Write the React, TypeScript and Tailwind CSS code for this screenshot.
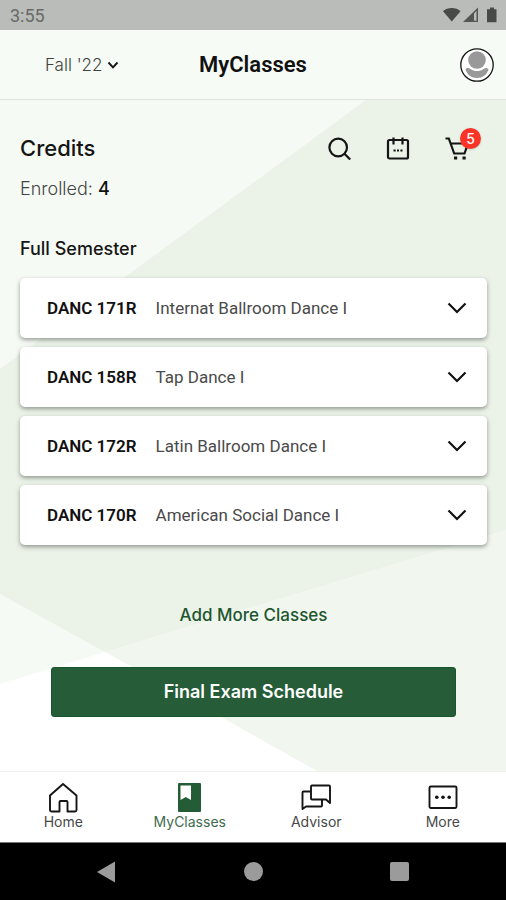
import { useState } from "react";
import type { ReactNode } from "react";

const roboto = "font-['Roboto','Liberation_Sans',sans-serif]";
const inter = "font-['Inter','Liberation_Sans',sans-serif]";

const courses = [
  { code: "DANC 171R", title: "Internat Ballroom Dance I" },
  { code: "DANC 158R", title: "Tap Dance I" },
  { code: "DANC 172R", title: "Latin Ballroom Dance I" },
  { code: "DANC 170R", title: "American Social Dance I" },
];

function StatusBar() {
  return (
    <div className={`flex h-[30px] items-center justify-between bg-[#babcb9] pr-2 pl-[10px] text-[#686a68] ${roboto}`}>
      <span className="pt-px text-lg leading-6">3:55</span>
      <svg width="56" height="18" viewBox="0 0 56 18" fill="#484a48" aria-hidden="true">
        <path d="M1 5.2C5.5 1 14 1 18.500 5.200L9.800 15.600Z" />
        <path d="M36 1.500V16H21Z" opacity=".9" />
        <path d="M32 7.500L34.500 4.800V14.800H32Z" fill="#babcb9" />
        <path d="M46 3.200H48V1.500H52V3.200H54.500V16.200H45V3.200Z" />
      </svg>
    </div>
  );
}

function Header() {
  return (
    <header className="grid h-[70px] grid-cols-[1fr_auto_1fr] items-center border-b border-[#dfe3de] bg-[#f6fbf5] px-3">
      <div className="flex items-center pl-[33px]">
        <select
          aria-label="Term"
          className={`w-[62px] appearance-none bg-transparent text-[17px] leading-6 font-light text-[#3f423f] ${inter}`}
        >
          <option>Fall '22</option>
        </select>
        <svg width="12" height="12" viewBox="0 0 12 12" fill="none" stroke="#151515" strokeWidth="1.900" className="pointer-events-none" aria-hidden="true">
          <path d="M1.500 3.500L6 8.300L10.500 3.500" />
        </svg>
      </div>
      <h1 className={`text-[22px] leading-7 font-semibold text-[#111] ${roboto}`}>MyClasses</h1>
      <button type="button" aria-label="Profile" className="justify-self-end rounded-full">
        <svg width="34" height="34" viewBox="0 0 34 34" aria-hidden="true">
          <circle cx="17" cy="17" r="16.200" fill="#fff" stroke="#151515" strokeWidth="1.300" />
          <circle cx="17" cy="12" r="8.800" fill="#999" />
          <path d="M5.500 21.500C6.500 19.500 8.500 19.500 10.500 21C14.500 23.800 19.500 23.800 23.500 21C25.500 19.500 27.500 19.500 28.500 21.500C27 26.500 22.500 30 17 30S7 26.500 5.500 21.500Z" fill="#999" />
        </svg>
      </button>
    </header>
  );
}

function Backdrop() {
  return (
    <svg className="absolute inset-0 h-full w-full" viewBox="0 0 506 671" preserveAspectRatio="none" aria-hidden="true">
      <rect width="506" height="671" fill="#f5faf4" />
      <path d="M366 0H506V430L105 552L0 494V269Z" fill="#ebf2e8" />
      <path d="M506 430V671H317L105 552Z" fill="#f1f7ef" />
      <path d="M0 584L105 552L317 671H0Z" fill="#fff" />
    </svg>
  );
}

function Actions() {
  return (
    <div className="flex gap-[35px] pr-[18px]">
      <button type="button" aria-label="Search">
        <svg width="24" height="24" viewBox="0 0 24 24" fill="none" stroke="#151515" strokeWidth="2.200" aria-hidden="true">
          <circle cx="11.200" cy="11.500" r="8.800" />
          <path d="M17.200 17.500L23.200 23.500" />
        </svg>
      </button>
      <button type="button" aria-label="Calendar">
        <svg width="24" height="24" viewBox="0 0 24 24" fill="none" stroke="#151515" strokeWidth="2.200" aria-hidden="true">
          <rect x="2" y="4" width="20" height="18.500" rx="1.500" />
          <path d="M7.500 1.500V8.500M16.500 1.500V8.500" />
          <path d="M7.500 14.500H9.700M11 14.500H13M14.400 14.500H16.500" />
        </svg>
      </button>
      <button type="button" aria-label="Cart, 5 items" className="relative">
        <svg width="24" height="24" viewBox="0 0 24 24" fill="none" stroke="#151515" strokeWidth="2.200" aria-hidden="true">
          <path d="M0.500 2.500H3.800L9.200 17.500H19.500L23 7.500H5.800" />
          <rect x="9" y="20.500" width="3.200" height="3" fill="#151515" stroke="none" />
          <rect x="17.500" y="20.500" width="3.200" height="3" fill="#151515" stroke="none" />
        </svg>
        <span className={`absolute -top-2 -right-3 flex size-[21px] items-center justify-center rounded-full bg-[#f93427] text-sm leading-4 font-medium text-white shadow-sm ${inter}`}>
          5
        </span>
      </button>
    </div>
  );
}

function CourseRow({ code, title }: { code: string; title: string }) {
  const [open, setOpen] = useState(false);
  return (
    <button
      type="button"
      aria-expanded={open}
      onClick={() => setOpen(!open)}
      className={`flex h-[60px] w-full items-center rounded-[5px] bg-white pr-5 pl-[27px] text-left text-[17px] leading-6 shadow-[0_2px_4px_rgba(60,70,60,0.5)] ${roboto}`}
    >
      <span className="font-semibold text-[#111]">{code}</span>
      <span className="ml-[19px] flex-1 font-normal text-[#4a4a4a]">{title}</span>
      <svg width="20" height="14" viewBox="0 0 20 14" fill="none" stroke="#111" strokeWidth="2.200" aria-hidden="true">
        <path d="M1.500 2.500L10 11L18.500 2.500" />
      </svg>
    </button>
  );
}

function NavItem({ label, active, children }: { label: string; active?: boolean; children: ReactNode }) {
  return (
    <a
      href="#"
      aria-current={active ? "page" : undefined}
      className={`flex flex-col items-center pt-[10px] text-sm leading-4 ${inter} ${active ? "text-[#416b50]" : "text-[#484848]"}`}
    >
      <svg width="32" height="32" viewBox="0 0 32 32" fill="none" stroke="#151515" strokeWidth="1.900" strokeLinejoin="round" aria-hidden="true">
        {children}
      </svg>
      {label}
    </a>
  );
}

function BottomNav() {
  return (
    <nav className="grid h-[71px] grid-cols-4 border-t border-[#eef1ed] bg-white">
      <NavItem label="Home">
        <path d="M16 2L29.500 13.500V28Q29.500 29.500 28 29.500H20.500V20Q20.500 19 19.500 19H13.500Q12.500 19 12.500 20V29.500H4.500Q3 29.500 3 28V13.500Z" />
      </NavItem>
      <NavItem label="MyClasses" active>
        <rect x="4" y="1" width="23" height="29" rx="1" fill="#245c35" stroke="none" />
        <path d="M6.500 3.500H17V18L11.800 15L6.500 18Z" fill="#fff" stroke="none" />
      </NavItem>
      <NavItem label="Advisor">
        <path d="M11 4.500Q11 3.500 12 3.500H29Q30 3.500 30 4.500V21L26 17.500H12Q11 17.500 11 16.500Z" />
        <path d="M10.500 9.500H3.500Q2.500 9.500 2.500 10.500V27L6 24.500H21Q22 24.500 22 23.500V18" />
      </NavItem>
      <NavItem label="More">
        <rect x="2.500" y="4.500" width="27" height="21.500" rx="1.200" />
        <g fill="#111" stroke="none">
          <circle cx="9.800" cy="15.300" r="1.800" />
          <circle cx="16" cy="15.300" r="1.800" />
          <circle cx="22.200" cy="15.300" r="1.800" />
        </g>
      </NavItem>
    </nav>
  );
}

function SystemBar() {
  return (
    <div className="grid h-[58px] grid-cols-3 items-center justify-items-center border-t border-[#777] bg-black px-[34px]">
      <button type="button" aria-label="Back">
        <svg width="20" height="22" viewBox="0 0 20 22" fill="#9b9b9b" aria-hidden="true">
          <path d="M18 0.500V21.500L0 11Z" />
        </svg>
      </button>
      <button type="button" aria-label="Home screen" className="size-[19px] rounded-full bg-[#9b9b9b]" />
      <button type="button" aria-label="Recent apps" className="size-[19px] rounded-xs bg-[#9b9b9b]" />
    </div>
  );
}

export default function App() {
  return (
    <div className="flex min-h-screen flex-col bg-white">
      <StatusBar />
      <Header />
      <main className="relative flex-1">
        <Backdrop />
        <div className={`relative pt-8 pr-[19px] pb-12 pl-5 text-[#151515] ${inter}`}>
          <div className="flex h-8 items-center justify-between">
            <h2 className="text-[22px] leading-8 font-medium">Credits</h2>
            <Actions />
          </div>
          <p className="mt-[13px] text-lg leading-6 font-light text-[#444]">
            Enrolled: <span className="font-medium text-[#111]">4</span>
          </p>
          <h3 className="mt-9 text-lg leading-6 font-medium">Full Semester</h3>
          <div className="mt-[17px] flex flex-col gap-[9px]">
            {courses.map((course) => (
              <CourseRow key={course.code} code={course.code} title={course.title} />
            ))}
          </div>
          <div className="mt-[58px] flex flex-col items-center gap-10 px-[31px]">
            <a href="#" className="text-[17px] leading-6 font-medium text-[#1d562f]">
              Add More Classes
            </a>
            <button type="button" className="h-[50px] w-full rounded-[3px] border border-[#17552a] bg-[#265d38] text-lg leading-6 font-semibold text-white">
              Final Exam Schedule
            </button>
          </div>
        </div>
      </main>
      <BottomNav />
      <SystemBar />
    </div>
  );
}
